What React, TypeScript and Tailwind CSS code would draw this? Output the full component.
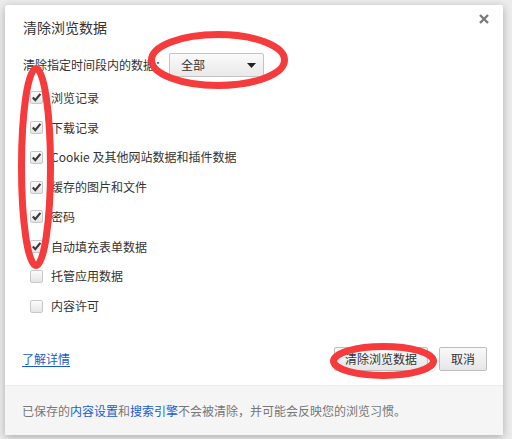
import React from "react";

const font = { fontFamily: '"Noto Sans CJK SC", "Noto Sans", sans-serif' };

const items = [
  { label: "浏览记录", checked: true },
  { label: "下载记录", checked: true },
  { label: "Cookie 及其他网站数据和插件数据", checked: true },
  { label: "缓存的图片和文件", checked: true },
  { label: "密码", checked: true },
  { label: "自动填充表单数据", checked: true },
  { label: "托管应用数据", checked: false },
  { label: "内容许可", checked: false },
];

function Checkbox({ checked }: { checked: boolean }) {
  return (
    <span className="flex h-[13px] w-[13px] shrink-0 items-center justify-center rounded-[2px] border border-[#c8c8c8] bg-gradient-to-b from-[#fbfbfb] to-[#e6e6e6]">
      {checked && (
        <svg width="11" height="11" viewBox="0 0 11 11">
          <path d="M1.8 5.6 L4.3 8.2 L9.4 1.9" fill="none" stroke="#3a3a3a" strokeWidth="2.2" />
        </svg>
      )}
    </span>
  );
}

export default function App() {
  return (
    <div className="relative h-[439px] w-[512px] overflow-hidden bg-[#ececec] pl-[5px] pt-[5px]" style={font}>
      <div className="flex h-[430px] w-[498px] flex-col rounded-[2px] bg-white shadow-[0_2px_8px_rgba(0,0,0,0.28)]">
        {/* Header */}
        <div className="flex items-start justify-between pl-[18px] pr-[13px] pt-[8px]">
          <h1 className="mt-[4px] text-[14px] leading-[20px] text-[#333]">清除浏览数据</h1>
          <button className="flex h-[12px] w-[12px] items-center justify-center">
            <svg width="10" height="10" viewBox="0 0 10 10">
              <path d="M1 1 L9 9 M9 1 L1 9" stroke="#7a7a7a" strokeWidth="2.4" />
            </svg>
          </button>
        </div>

        {/* Time range */}
        <div className="mt-[16px] flex items-center pl-[18px] text-[12px] text-[#333]">
          <span>清除指定时间段内的数据：</span>
          <div className="ml-[2px] flex h-[24px] w-[95px] items-center justify-between rounded-[2px] border border-[#c4c4c4] bg-gradient-to-b from-[#fafafa] to-[#e9e9e9] pl-[11px] pr-[7px]">
            <span>全部</span>
            <svg width="9" height="5" viewBox="0 0 9 5">
              <path d="M0 0 L9 0 L4.5 5 Z" fill="#222" />
            </svg>
          </div>
        </div>

        {/* Checkbox list */}
        <ul className="mt-[6px] pl-[25px]">
          {items.map((it) => (
            <li key={it.label} className="flex h-[29.75px] items-center gap-[8px] text-[12px] text-[#333]">
              <Checkbox checked={it.checked} />
              <span>{it.label}</span>
            </li>
          ))}
        </ul>

        {/* Actions */}
        <div className="mt-[26px] flex items-center justify-between pl-[17px] pr-[16px]">
          <a href="#" className="text-[12px] text-[#1a5ccf] underline underline-offset-2">
            了解详情
          </a>
          <div className="flex gap-[11px]">
            <button className="h-[24px] w-[94px] rounded-[2px] border border-[#bdbdbd] bg-gradient-to-b from-[#f9f9f9] to-[#e6e6e6] text-[12px] text-[#333]">
              清除浏览数据
            </button>
            <button className="h-[24px] w-[48px] rounded-[2px] border border-[#bdbdbd] bg-gradient-to-b from-[#f9f9f9] to-[#e6e6e6] text-[12px] text-[#333]">
              取消
            </button>
          </div>
        </div>

        {/* Footer */}
        <div className="mt-auto flex h-[50px] items-center border-t border-[#ebebeb] bg-[#f5f5f5] px-[17px] text-[12px] text-[#777]">
          <p>
            已保存的<span className="text-[#1a5ccf]">内容设置</span>和<span className="text-[#1a5ccf]">搜索引擎</span>不会被清除，并可能会反映您的浏览习惯。
          </p>
        </div>
      </div>

      {/* Red annotation marks */}
      <svg className="pointer-events-none absolute left-0 top-0" width="512" height="439" viewBox="0 0 512 439">
        <ellipse cx="36" cy="167" rx="14.5" ry="98.5" fill="none" stroke="#f53b3b" strokeWidth="7" />
        <ellipse cx="218" cy="60" rx="66.5" ry="25.5" fill="none" stroke="#f53b3b" strokeWidth="7" />
        <ellipse cx="383.5" cy="361" rx="50" ry="14.5" fill="none" stroke="#f53b3b" strokeWidth="7" />
      </svg>
    </div>
  );
}
